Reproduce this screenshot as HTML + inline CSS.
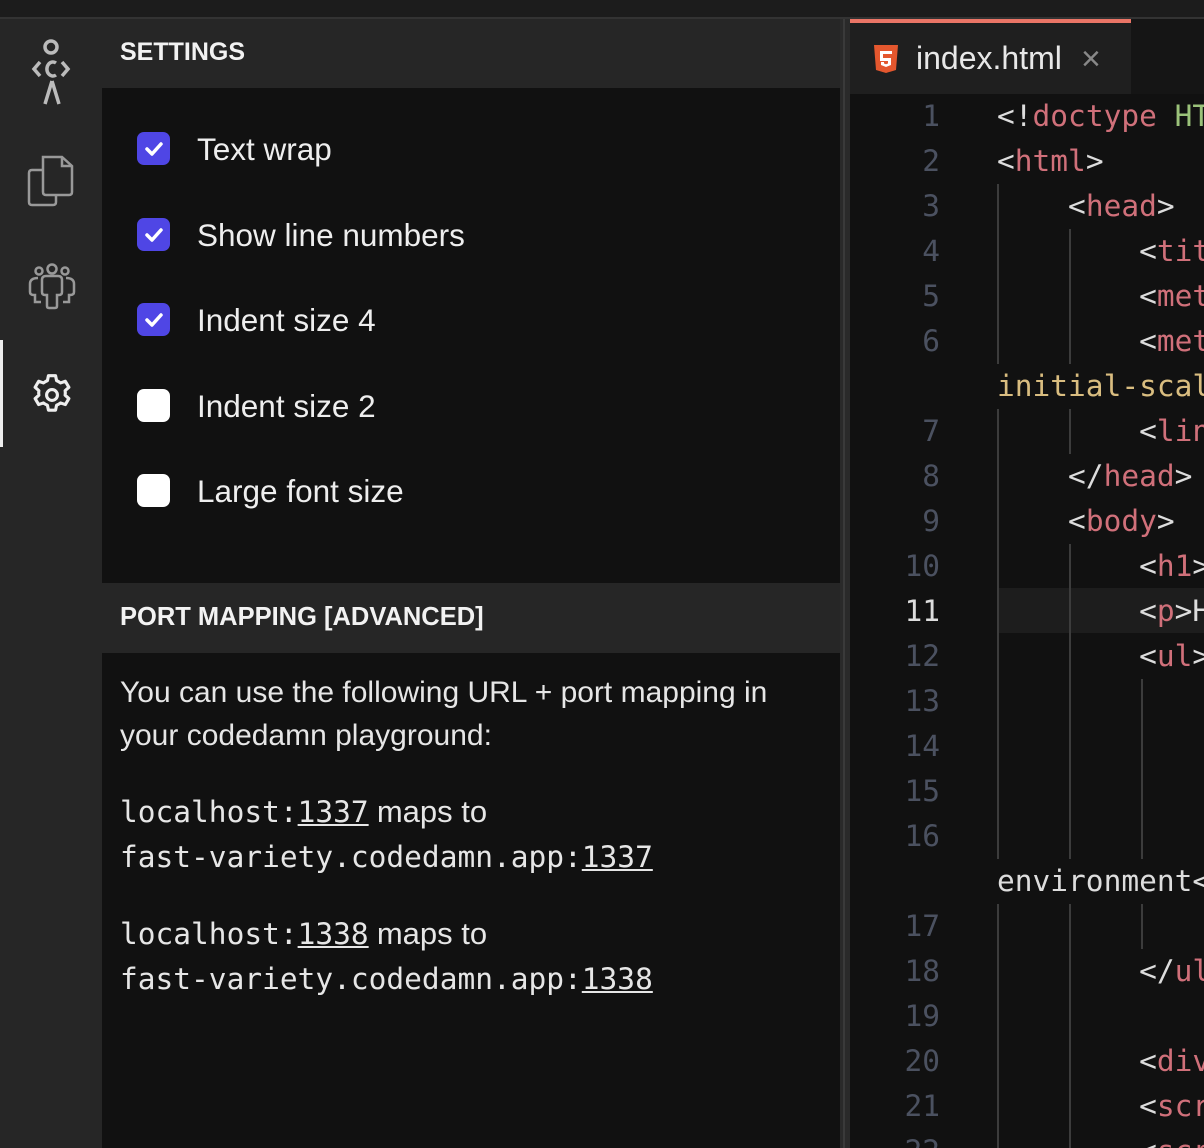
<!DOCTYPE html>
<html style="overflow:hidden;width:1204px;height:1148px"><head><meta charset="utf-8"><style>
*{margin:0;padding:0;box-sizing:border-box}
body{width:1204px;height:1148px;overflow:hidden;background:#111;position:relative;font-family:"Liberation Sans",sans-serif;color:#eee}
.a{position:absolute}
.mono{font-family:"DejaVu Sans Mono",monospace}
.cb{position:absolute;left:137px;width:33px;height:33px;border-radius:7px;background:#4f46e5}
.cb.off{background:#fff}
.lbl{position:absolute;left:197px;font-size:31.5px;color:#eee;line-height:32px}
.row{position:absolute;left:850px;width:354px;height:45px;font-size:29.5px;line-height:45px;white-space:pre;overflow:hidden}
.ln{position:absolute;right:264px;color:#4b5160;text-align:right}
.code{position:absolute;left:147px;color:#ddd}
.g{position:absolute;top:0;width:2px;height:45px;background:#3c3c3c}
.t{color:#d0707a}.y{color:#d9bd80}.gr{color:#9bc27a}
</style></head><body>
<div class="a" style="left:0;top:0;width:1204px;height:17px;background:#1c1c1c"></div>
<div class="a" style="left:0;top:17px;width:1204px;height:2px;background:#333"></div>
<div class="a" style="left:0;top:19px;width:102px;height:1129px;background:#262626"></div>
<div class="a" style="left:0;top:340px;width:3px;height:107px;background:#eee"></div>
<svg class="a" style="left:26px;top:38px" width="52" height="70" viewBox="0 0 52 70" fill="none" stroke="#bbb" stroke-width="3.5">
<circle cx="25" cy="9" r="6"/>
<path d="M14 24 L8 31 L14 38 M36 24 L42 31 L36 38"/>
<path d="M30 25 A6 7 0 1 0 30 37"/>
<path d="M26 43 L19 66 M26 43 L33 66"/>
</svg>
<svg class="a" style="left:26px;top:153px" width="50" height="55" viewBox="0 0 50 55" fill="none" stroke="#999" stroke-width="2.5">
<path d="M17 4 H36 L46 13 V39 Q46 42 43 42 H20 Q17 42 17 39 Z"/>
<path d="M36 4 V13 H46"/>
<path d="M17 17 H6 Q3 17 3 20 V49 Q3 52 6 52 H27 Q30 52 30 49 V42"/>
</svg>
<svg class="a" style="left:26px;top:262px" width="52" height="50" viewBox="0 0 52 50" fill="none" stroke="#999" stroke-width="2.5">
<circle cx="13" cy="9" r="3.5"/><circle cx="26" cy="7" r="4.5"/><circle cx="39" cy="9" r="3.5"/>
<path d="M20 14 H32 Q36 14 36 18 V30 Q36 33 33 33 H31 V44 Q31 46 29 46 H23 Q21 46 21 44 V33 H19 Q16 33 16 30 V18 Q16 14 20 14 Z"/>
<path d="M12 16 Q4 16 4 22 V30 Q4 33 8 33 H9 V40 H15"/>
<path d="M40 16 Q48 16 48 22 V30 Q48 33 44 33 H43 V40 H37"/>
</svg>
<svg class="a" style="left:27px;top:370px" width="50" height="50" viewBox="0 0 24 24" fill="none" stroke="#eee" stroke-width="1.5" stroke-linejoin="round">
<path d="M10.3 2.7 h3.4 l.5 2.4 a7.5 7.5 0 0 1 1.9 1.1 l2.3-.8 1.7 2.9-1.8 1.6 a7.5 7.5 0 0 1 0 2.2 l1.8 1.6-1.7 2.9-2.3-.8 a7.5 7.5 0 0 1-1.9 1.1 l-.5 2.4 h-3.4 l-.5-2.4 a7.5 7.5 0 0 1-1.9-1.1 l-2.3.8-1.7-2.9 1.8-1.6 a7.5 7.5 0 0 1 0-2.2 l-1.8-1.6 1.7-2.9 2.3.8 a7.5 7.5 0 0 1 1.9-1.1 z"/>
<circle cx="12" cy="12" r="2.6"/>
</svg>
<div class="a" style="left:102px;top:19px;width:738px;height:69px;background:#262626"></div>
<div class="a" style="left:120px;top:38px;font-size:25px;font-weight:bold;color:#f2f2f2">SETTINGS</div>
<div class="a" style="left:102px;top:88px;width:738px;height:495px;background:#111"></div>
<div class="cb" style="top:132px"><svg width="33" height="33"><path d="M10 17 L15 22 L24 12" stroke="#fff" stroke-width="3.5" fill="none" stroke-linecap="round" stroke-linejoin="round"/></svg></div>
<div class="cb" style="top:218px"><svg width="33" height="33"><path d="M10 17 L15 22 L24 12" stroke="#fff" stroke-width="3.5" fill="none" stroke-linecap="round" stroke-linejoin="round"/></svg></div>
<div class="cb" style="top:303px"><svg width="33" height="33"><path d="M10 17 L15 22 L24 12" stroke="#fff" stroke-width="3.5" fill="none" stroke-linecap="round" stroke-linejoin="round"/></svg></div>
<div class="cb off" style="top:389px"></div>
<div class="cb off" style="top:474px"></div>
<div class="lbl" style="top:133px">Text wrap</div>
<div class="lbl" style="top:219px">Show line numbers</div>
<div class="lbl" style="top:304px">Indent size 4</div>
<div class="lbl" style="top:390px">Indent size 2</div>
<div class="lbl" style="top:475px">Large font size</div>
<div class="a" style="left:102px;top:583px;width:738px;height:70px;background:#262626"></div>
<div class="a" style="left:120px;top:603px;font-size:25.5px;font-weight:bold;color:#f2f2f2">PORT MAPPING [ADVANCED]</div>
<div class="a" style="left:120px;top:671px;width:700px;font-size:30px;line-height:43px;color:#e6e6e6">You can use the following URL + port mapping in your codedamn playground:</div>
<div class="a" style="left:120px;top:790px;font-size:29.5px;line-height:44px;color:#e6e6e6;white-space:pre"><span class="mono">localhost:<u>1337</u></span> <span style="font-size:31px">maps to</span><br><span class="mono">fast-variety.codedamn.app:<u>1337</u></span></div>
<div class="a" style="left:120px;top:912px;font-size:29.5px;line-height:44px;color:#e6e6e6;white-space:pre"><span class="mono">localhost:<u>1338</u></span> <span style="font-size:31px">maps to</span><br><span class="mono">fast-variety.codedamn.app:<u>1338</u></span></div>
<div class="a" style="left:840px;top:19px;width:10px;height:1129px;background:#2a2a2a"></div>
<div class="a" style="left:843px;top:19px;width:2px;height:1129px;background:#3a3a3a"></div>
<div class="a" style="left:850px;top:19px;width:354px;height:75px;background:#151515"></div>
<div class="a" style="left:850px;top:19px;width:281px;height:75px;background:#1f1f1f"></div>
<div class="a" style="left:850px;top:19px;width:281px;height:4px;background:#ea7566"></div>
<svg class="a" style="left:873px;top:44px" width="26" height="30" viewBox="0 0 26 30"><path d="M1 1 H25 L23 26 L13 29 L3 26 Z" fill="#e4572e"/><path d="M7 7 H19 V10 H10 V14 H18 V21 L13 23 L8 21 V18 H11 V19.5 L13 20.3 L15 19.5 V17 H7 Z" fill="#fff"/></svg>
<div class="a" style="left:916px;top:40px;font-size:32px;color:#e8e8e8">index.html</div>
<div class="a" style="left:1081px;top:40px;font-size:34px;color:#888">×</div>
<div class="a" style="left:850px;top:94px;width:354px;height:1054px;background:#111"></div>
<div class="a" style="left:997px;top:588px;width:207px;height:45px;background:#1d1d1d"></div>

<div class="row mono" style="top:94px"><span class="ln">1</span><span class="code">&lt;!<span class="t">doctype</span> <span class="gr">HT</span></span></div>
<div class="row mono" style="top:139px"><span class="ln">2</span><span class="code">&lt;<span class="t">html</span>&gt;</span></div>
<div class="row mono" style="top:184px"><span class="g" style="left:147px"></span><span class="ln">3</span><span class="code">    &lt;<span class="t">head</span>&gt;</span></div>
<div class="row mono" style="top:229px"><span class="g" style="left:147px"></span><span class="g" style="left:219px"></span><span class="ln">4</span><span class="code">        &lt;<span class="t">tit</span></span></div>
<div class="row mono" style="top:274px"><span class="g" style="left:147px"></span><span class="g" style="left:219px"></span><span class="ln">5</span><span class="code">        &lt;<span class="t">met</span></span></div>
<div class="row mono" style="top:319px"><span class="g" style="left:147px"></span><span class="g" style="left:219px"></span><span class="ln">6</span><span class="code">        &lt;<span class="t">met</span></span></div>
<div class="row mono" style="top:364px"><span class="code y">initial-scal</span></div>
<div class="row mono" style="top:409px"><span class="g" style="left:147px"></span><span class="g" style="left:219px"></span><span class="ln">7</span><span class="code">        &lt;<span class="t">lin</span></span></div>
<div class="row mono" style="top:454px"><span class="g" style="left:147px"></span><span class="ln">8</span><span class="code">    &lt;/<span class="t">head</span>&gt;</span></div>
<div class="row mono" style="top:499px"><span class="g" style="left:147px"></span><span class="ln">9</span><span class="code">    &lt;<span class="t">body</span>&gt;</span></div>
<div class="row mono" style="top:544px"><span class="g" style="left:147px"></span><span class="g" style="left:219px"></span><span class="ln">10</span><span class="code">        &lt;<span class="t">h1</span>&gt;</span></div>
<div class="row mono" style="top:589px"><span class="g" style="left:147px"></span><span class="g" style="left:219px"></span><span class="ln" style="color:#ddd">11</span><span class="code">        &lt;<span class="t">p</span>&gt;H</span></div>
<div class="row mono" style="top:634px"><span class="g" style="left:147px"></span><span class="g" style="left:219px"></span><span class="ln">12</span><span class="code">        &lt;<span class="t">ul</span>&gt;</span></div>
<div class="row mono" style="top:679px"><span class="g" style="left:147px"></span><span class="g" style="left:219px"></span><span class="g" style="left:291px"></span><span class="ln">13</span></div>
<div class="row mono" style="top:724px"><span class="g" style="left:147px"></span><span class="g" style="left:219px"></span><span class="g" style="left:291px"></span><span class="ln">14</span></div>
<div class="row mono" style="top:769px"><span class="g" style="left:147px"></span><span class="g" style="left:219px"></span><span class="g" style="left:291px"></span><span class="ln">15</span></div>
<div class="row mono" style="top:814px"><span class="g" style="left:147px"></span><span class="g" style="left:219px"></span><span class="g" style="left:291px"></span><span class="ln">16</span></div>
<div class="row mono" style="top:859px"><span class="code">environment&lt;</span></div>
<div class="row mono" style="top:904px"><span class="g" style="left:147px"></span><span class="g" style="left:219px"></span><span class="g" style="left:291px"></span><span class="ln">17</span></div>
<div class="row mono" style="top:949px"><span class="g" style="left:147px"></span><span class="g" style="left:219px"></span><span class="ln">18</span><span class="code">        &lt;/<span class="t">ul</span></span></div>
<div class="row mono" style="top:994px"><span class="g" style="left:147px"></span><span class="g" style="left:219px"></span><span class="ln">19</span></div>
<div class="row mono" style="top:1039px"><span class="g" style="left:147px"></span><span class="g" style="left:219px"></span><span class="ln">20</span><span class="code">        &lt;<span class="t">div</span></span></div>
<div class="row mono" style="top:1084px"><span class="g" style="left:147px"></span><span class="g" style="left:219px"></span><span class="ln">21</span><span class="code">        &lt;<span class="t">scr</span></span></div>
<div class="row mono" style="top:1129px;height:19px"><span class="g" style="left:147px"></span><span class="g" style="left:219px"></span><span class="ln">22</span><span class="code">        &lt;<span class="t">scr</span></span></div>
</body></html>
